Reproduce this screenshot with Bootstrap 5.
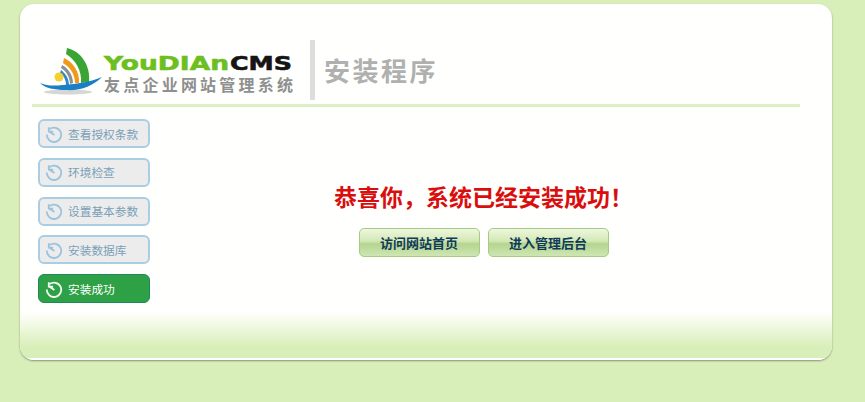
<!DOCTYPE html>
<html lang="zh-CN">
<head>
  <meta charset="UTF-8" />
  <meta name="viewport" content="width=device-width, initial-scale=1" />
  <title>安装程序</title>
  <link href="https://cdn.jsdelivr.net/npm/bootstrap@5.3.2/dist/css/bootstrap.min.css" rel="stylesheet">
  <style>
    body { background-color: #d9efba; font-family: "Noto Sans CJK SC", sans-serif; height: 402px; overflow: hidden; }
    .install-panel { width: 812px; height: 356px; margin: 4px 0 0 20px; background: #fffffd; border-radius: 14px; box-shadow: 0 1px 2px rgba(70,70,50,.55); overflow: hidden; }
    .install-head { height: 103px; margin: 0 32px 0 12px; border-bottom: 3px solid #dcefc5; padding: 36px 0 0 6px; }
    .logo-box { width: 256px; height: 60px; }
    .logo-mark { filter: blur(.4px); }
    .logo-cn { font-family: "Noto Sans CJK SC", sans-serif; font-weight: 700; font-size: 16px; fill: #8f8f8f; }
    .logo-en { font-family: "DejaVu Sans", sans-serif; font-weight: 700; font-size: 20px; stroke-width: .6px; }
    .head-rule { width: 5px; height: 60px; background: #dddddd; margin-left: 16px; }
    .head-title { font-size: 26px; font-weight: 700; letter-spacing: 2.5px; color: #b0b0b0; margin: 0 0 0 9px; line-height: 60px; }
    .step-col { width: 130px; padding: 12px 0 0 18px; gap: 9.75px; }
    .step-btn { width: 112px; height: 29px; padding: 0 0 0 5px; gap: 5px; font-size: 11.7px; color: #7a9fb8; background: #ececec; border: 2px solid #a9cde2; border-radius: 6px; }
    .step-btn:hover { color: #7a9fb8; background: #ececec; border-color: #a9cde2; }
    .step-btn svg { width: 18px; height: 18px; stroke: #9cc3dc; flex: none; }
    .step-btn.step-on, .step-btn.step-on:hover { color: #fff; background: #2ea046; border-color: #1d8a5c; border-width: 1px; padding-left: 6px; }
    .step-btn.step-on svg { stroke: #f4fbf4; }
    .done-box { padding-right: 15px; padding-top: 74px; }
    .done-msg { font-size: 23px; font-weight: 700; color: #d90f0f; line-height: 30px; margin: 0 0 17px; }
    .go-btn { width: 121px; height: 29px; padding: 0; font-size: 13px; font-weight: 700; color: #0f3a5a; background: linear-gradient(#eef7df 0%, #d3e8b4 45%, #b4d58f 55%, #cfe6b4 100%); border: 1px solid #a3cc85; border-radius: 5px; }
    .go-btn:hover { color: #0f3a5a; background: linear-gradient(#eef7df 0%, #d3e8b4 45%, #b4d58f 55%, #cfe6b4 100%); border-color: #a3cc85; }
    .install-foot { height: 48px; background: linear-gradient(#fffffd 0%, #d9efba 75%); border-bottom: 2px solid #fff; }
  </style>
</head>
<body>
  <svg width="0" height="0" class="position-absolute">
    <symbol id="ico-back" viewBox="0 0 20 20">
      <path d="M5 4.6A8 8 0 1 1 2 10.5" fill="none" stroke-width="2"/>
      <path d="M4.2 2.6V7.4H9M4.6 7.2L10.5 11" fill="none" stroke-width="2"/>
    </symbol>
  </svg>

  <div class="install-panel d-flex flex-column">
    <div class="install-head d-flex align-items-start">
      <svg class="logo-box" viewBox="0 0 256 60">
        <g class="logo-mark">
          <ellipse cx="30" cy="52" rx="24" ry="2.5" fill="#999" opacity=".4"/>
          <path d="M29 8C43 11 53 26 51 42L43 43C44 31 38 20 28 14Z" fill="#3aa535"/>
          <path d="M26 18C35 22 42 32 41 43L37 43C37 34 32 27 25 23Z" fill="#f09a1c"/>
          <path d="M24 25C30 28 35 35 35 43L32 44C32 37 28 31 23 28Z" fill="#8b8f96"/>
          <path d="M23 30C27 33 31 38 31 45L28 45C28 39 25 35 22 33Z" fill="#2f88cc"/>
          <circle cx="21" cy="37" r="4.5" fill="#f6cf34"/>
          <path d="M2 43C10 46 15 46 25 45C40 44 52 42 64 37C55 46 42 51 28 50C16 50 7 48 2 43Z" fill="#1b7fc6"/>
        </g>
        <text class="logo-en" x="66" y="29.5" fill="#6cbf1f" stroke="#6cbf1f" textLength="125" lengthAdjust="spacingAndGlyphs">YouDIAn</text>
        <text class="logo-en" x="192" y="29.5" fill="#151515" stroke="#151515" textLength="62" lengthAdjust="spacingAndGlyphs">CMS</text>
        <text class="logo-cn" x="66" y="51" textLength="189" lengthAdjust="spacing">友点企业网站管理系统</text>
      </svg>
      <div class="head-rule"></div>
      <h1 class="head-title">安装程序</h1>
    </div>

    <div class="d-flex flex-grow-1">
      <div class="step-col d-flex flex-column flex-shrink-0" id="steps"></div>
      <div class="done-box flex-grow-1 text-center">
        <h2 class="done-msg">恭喜你，系统已经安装成功！</h2>
        <div class="d-flex justify-content-center gap-2">
          <a href="#" class="btn go-btn d-flex align-items-center justify-content-center">访问网站首页</a>
          <a href="#" class="btn go-btn d-flex align-items-center justify-content-center">进入管理后台</a>
        </div>
      </div>
    </div>

    <div class="install-foot"></div>
  </div>

  <script src="https://cdn.jsdelivr.net/npm/bootstrap@5.3.2/dist/js/bootstrap.bundle.min.js"></script>
  <script>
    const steps = ["查看授权条款", "环境检查", "设置基本参数", "安装数据库", "安装成功"];
    const box = document.getElementById("steps");
    steps.forEach((name, i) => {
      const on = i === steps.length - 1 ? " step-on" : "";
      box.insertAdjacentHTML("beforeend", `
        <a href="#" class="btn step-btn d-flex align-items-center${on}">
          <svg><use href="#ico-back"></use></svg><span>${name}</span>
        </a>`);
    });
  </script>
</body>
</html>
